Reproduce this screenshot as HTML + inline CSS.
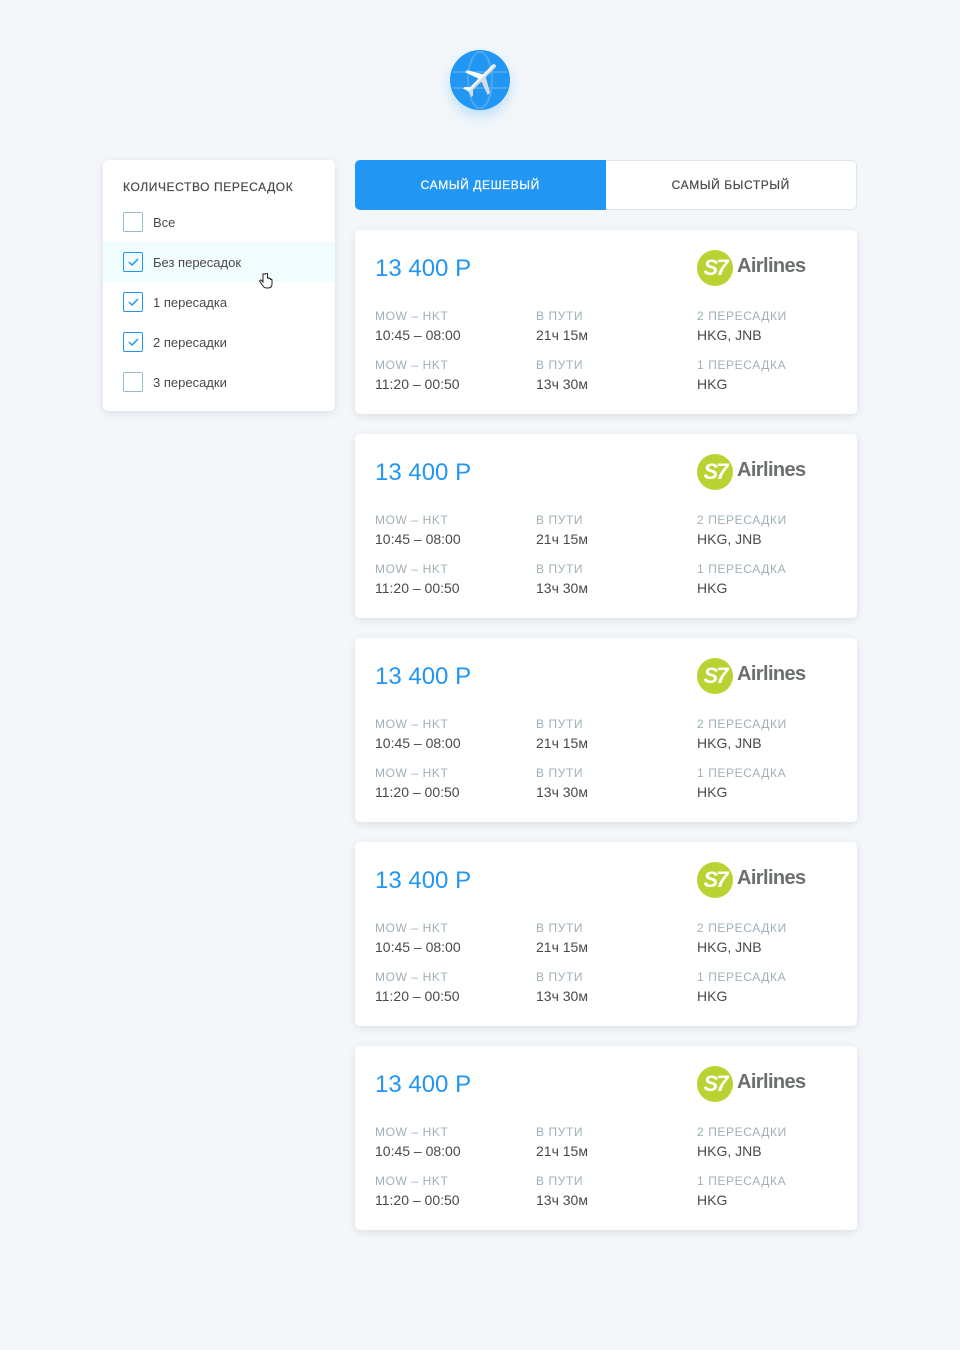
<!DOCTYPE html>
<html><head><meta charset="utf-8"><style>
*{box-sizing:border-box;margin:0;padding:0}
body{width:960px;height:1350px;background:#F3F7FA;font-family:"Liberation Sans",sans-serif;position:relative;overflow:hidden}
.logo{position:absolute;left:450px;top:50px;width:60px;height:60px;border-radius:50%;background:#2196F3;box-shadow:0 6px 12px rgba(33,150,243,.25)}
.filter{position:absolute;left:103px;top:160px;width:232px;height:251px;background:#fff;border-radius:5px;box-shadow:0 2px 8px rgba(0,0,0,.1)}
.ft{position:absolute;left:20px;top:20px;font-size:12px;letter-spacing:.6px;color:#4A4A4A;-webkit-text-stroke:.2px #4A4A4A}
.row{position:absolute;left:0;width:232px;height:40px}
.row.hl{background:#F1FCFF}
.cb{position:absolute;left:20px;top:10px;width:20px;height:20px;border:1px solid #9ABBCE;border-radius:2px}
.cb.on{border-color:#2196F3}
.cb.on svg{position:absolute;left:4px;top:5px}
.lbl{position:absolute;left:50px;top:13px;font-size:13px;color:#4A4A4A}
.tabs{position:absolute;left:355px;top:160px;width:502px;height:50px;display:flex;font-size:12px;letter-spacing:.6px}
.tab{flex:1;display:flex;align-items:center;justify-content:center;-webkit-text-stroke:.2px currentColor}
.t1{background:#2196F3;color:#fff;border-radius:5px 0 0 5px}
.t2{background:#fff;color:#4A4A4A;border:1px solid #DFE5EC;border-left:none;border-radius:0 5px 5px 0}
.card{position:absolute;left:355px;width:502px;height:184px;background:#fff;border-radius:5px;box-shadow:0 2px 8px rgba(0,0,0,.1)}
.price{position:absolute;left:20px;top:25px;font-size:24px;color:#2196F3}
.s7{position:absolute;left:342px;top:20px;width:36px;height:36px;border-radius:50%;background:#B9D432;color:#fff;font-weight:bold;font-style:italic;font-size:22px;line-height:36px;text-align:center;letter-spacing:-2px}
.air{position:absolute;left:382px;top:25px;font-size:20px;font-weight:bold;color:#6C6F70;letter-spacing:-.6px}
.l{position:absolute;font-size:12px;letter-spacing:.6px;color:#A0B0B9}
.v{position:absolute;font-size:14px;color:#4A4A4A}
</style></head><body>
<div class="logo"><svg width="60" height="60" viewBox="0 0 60 60">
<g stroke="#4AA8F5" stroke-width="2" fill="none"><ellipse cx="30" cy="30" rx="12" ry="28"/><line x1="3" y1="22" x2="57" y2="22"/><line x1="3" y1="38" x2="57" y2="38"/></g>
<g transform="rotate(45 30 30)"><path fill="#fff" d="M28 10 Q30 7 32 10 L32 24 L46 32 L46 35 L32 30 L32 42 L36 46 L36 48 L30 46 L24 48 L24 46 L28 42 L28 30 L14 35 L14 32 L28 24Z"/><path fill="#D8DCE0" d="M30 8 Q31 8 32 10 L32 24 L46 32 L46 35 L32 30 L32 42 L36 46 L36 48 L30 46Z"/></g></svg></div>
<div class="filter">
<div class="ft">КОЛИЧЕСТВО ПЕРЕСАДОК</div>
<div class="row" style="top:42px"><div class="cb"></div><div class="lbl">Все</div></div>
<div class="row hl" style="top:82px"><div class="cb on"><svg width="11" height="8"><path d="M1 4l3 3 6-6" stroke="#2196F3" stroke-width="1.5" fill="none"/></svg></div><div class="lbl">Без пересадок</div><svg style="position:absolute;left:156px;top:31px" width="14" height="16" viewBox="0 0 14 16"><path d="M4 1v8l-1.5-1.5c-1-1-2.5 0-1.5 1.2L4 13c1 1.5 2 2 4 2h1c2.5 0 4-1.5 4-4V7c0-1-1.5-1-1.5 0V6c0-1-1.5-1-1.5 0V5.5c0-1-1.5-1-1.5 0V1c0-1.3-2-1.3-2 0z" fill="#fff" stroke="#222" stroke-width="1"/></svg></div>
<div class="row" style="top:122px"><div class="cb on"><svg width="11" height="8"><path d="M1 4l3 3 6-6" stroke="#2196F3" stroke-width="1.5" fill="none"/></svg></div><div class="lbl">1 пересадка</div></div>
<div class="row" style="top:162px"><div class="cb on"><svg width="11" height="8"><path d="M1 4l3 3 6-6" stroke="#2196F3" stroke-width="1.5" fill="none"/></svg></div><div class="lbl">2 пересадки</div></div>
<div class="row" style="top:202px"><div class="cb"></div><div class="lbl">3 пересадки</div></div>
</div>
<div class="tabs"><div class="tab t1">САМЫЙ ДЕШЕВЫЙ</div><div class="tab t2">САМЫЙ БЫСТРЫЙ</div></div>

<div class="card" style="top:230px"><div class="price">13 400 Р</div><div class="s7">S7</div><div class="air">Airlines</div>
<div class="l" style="left:20px;top:79px">MOW – HKT</div><div class="v" style="left:20px;top:97px">10:45 – 08:00</div>
<div class="l" style="left:181px;top:79px">В ПУТИ</div><div class="v" style="left:181px;top:97px">21ч 15м</div>
<div class="l" style="left:342px;top:79px">2 ПЕРЕСАДКИ</div><div class="v" style="left:342px;top:97px">HKG, JNB</div>
<div class="l" style="left:20px;top:128px">MOW – HKT</div><div class="v" style="left:20px;top:146px">11:20 – 00:50</div>
<div class="l" style="left:181px;top:128px">В ПУТИ</div><div class="v" style="left:181px;top:146px">13ч 30м</div>
<div class="l" style="left:342px;top:128px">1 ПЕРЕСАДКА</div><div class="v" style="left:342px;top:146px">HKG</div></div>

<div class="card" style="top:434px"><div class="price">13 400 Р</div><div class="s7">S7</div><div class="air">Airlines</div>
<div class="l" style="left:20px;top:79px">MOW – HKT</div><div class="v" style="left:20px;top:97px">10:45 – 08:00</div>
<div class="l" style="left:181px;top:79px">В ПУТИ</div><div class="v" style="left:181px;top:97px">21ч 15м</div>
<div class="l" style="left:342px;top:79px">2 ПЕРЕСАДКИ</div><div class="v" style="left:342px;top:97px">HKG, JNB</div>
<div class="l" style="left:20px;top:128px">MOW – HKT</div><div class="v" style="left:20px;top:146px">11:20 – 00:50</div>
<div class="l" style="left:181px;top:128px">В ПУТИ</div><div class="v" style="left:181px;top:146px">13ч 30м</div>
<div class="l" style="left:342px;top:128px">1 ПЕРЕСАДКА</div><div class="v" style="left:342px;top:146px">HKG</div></div>

<div class="card" style="top:638px"><div class="price">13 400 Р</div><div class="s7">S7</div><div class="air">Airlines</div>
<div class="l" style="left:20px;top:79px">MOW – HKT</div><div class="v" style="left:20px;top:97px">10:45 – 08:00</div>
<div class="l" style="left:181px;top:79px">В ПУТИ</div><div class="v" style="left:181px;top:97px">21ч 15м</div>
<div class="l" style="left:342px;top:79px">2 ПЕРЕСАДКИ</div><div class="v" style="left:342px;top:97px">HKG, JNB</div>
<div class="l" style="left:20px;top:128px">MOW – HKT</div><div class="v" style="left:20px;top:146px">11:20 – 00:50</div>
<div class="l" style="left:181px;top:128px">В ПУТИ</div><div class="v" style="left:181px;top:146px">13ч 30м</div>
<div class="l" style="left:342px;top:128px">1 ПЕРЕСАДКА</div><div class="v" style="left:342px;top:146px">HKG</div></div>

<div class="card" style="top:842px"><div class="price">13 400 Р</div><div class="s7">S7</div><div class="air">Airlines</div>
<div class="l" style="left:20px;top:79px">MOW – HKT</div><div class="v" style="left:20px;top:97px">10:45 – 08:00</div>
<div class="l" style="left:181px;top:79px">В ПУТИ</div><div class="v" style="left:181px;top:97px">21ч 15м</div>
<div class="l" style="left:342px;top:79px">2 ПЕРЕСАДКИ</div><div class="v" style="left:342px;top:97px">HKG, JNB</div>
<div class="l" style="left:20px;top:128px">MOW – HKT</div><div class="v" style="left:20px;top:146px">11:20 – 00:50</div>
<div class="l" style="left:181px;top:128px">В ПУТИ</div><div class="v" style="left:181px;top:146px">13ч 30м</div>
<div class="l" style="left:342px;top:128px">1 ПЕРЕСАДКА</div><div class="v" style="left:342px;top:146px">HKG</div></div>

<div class="card" style="top:1046px"><div class="price">13 400 Р</div><div class="s7">S7</div><div class="air">Airlines</div>
<div class="l" style="left:20px;top:79px">MOW – HKT</div><div class="v" style="left:20px;top:97px">10:45 – 08:00</div>
<div class="l" style="left:181px;top:79px">В ПУТИ</div><div class="v" style="left:181px;top:97px">21ч 15м</div>
<div class="l" style="left:342px;top:79px">2 ПЕРЕСАДКИ</div><div class="v" style="left:342px;top:97px">HKG, JNB</div>
<div class="l" style="left:20px;top:128px">MOW – HKT</div><div class="v" style="left:20px;top:146px">11:20 – 00:50</div>
<div class="l" style="left:181px;top:128px">В ПУТИ</div><div class="v" style="left:181px;top:146px">13ч 30м</div>
<div class="l" style="left:342px;top:128px">1 ПЕРЕСАДКА</div><div class="v" style="left:342px;top:146px">HKG</div></div>
</body></html>
